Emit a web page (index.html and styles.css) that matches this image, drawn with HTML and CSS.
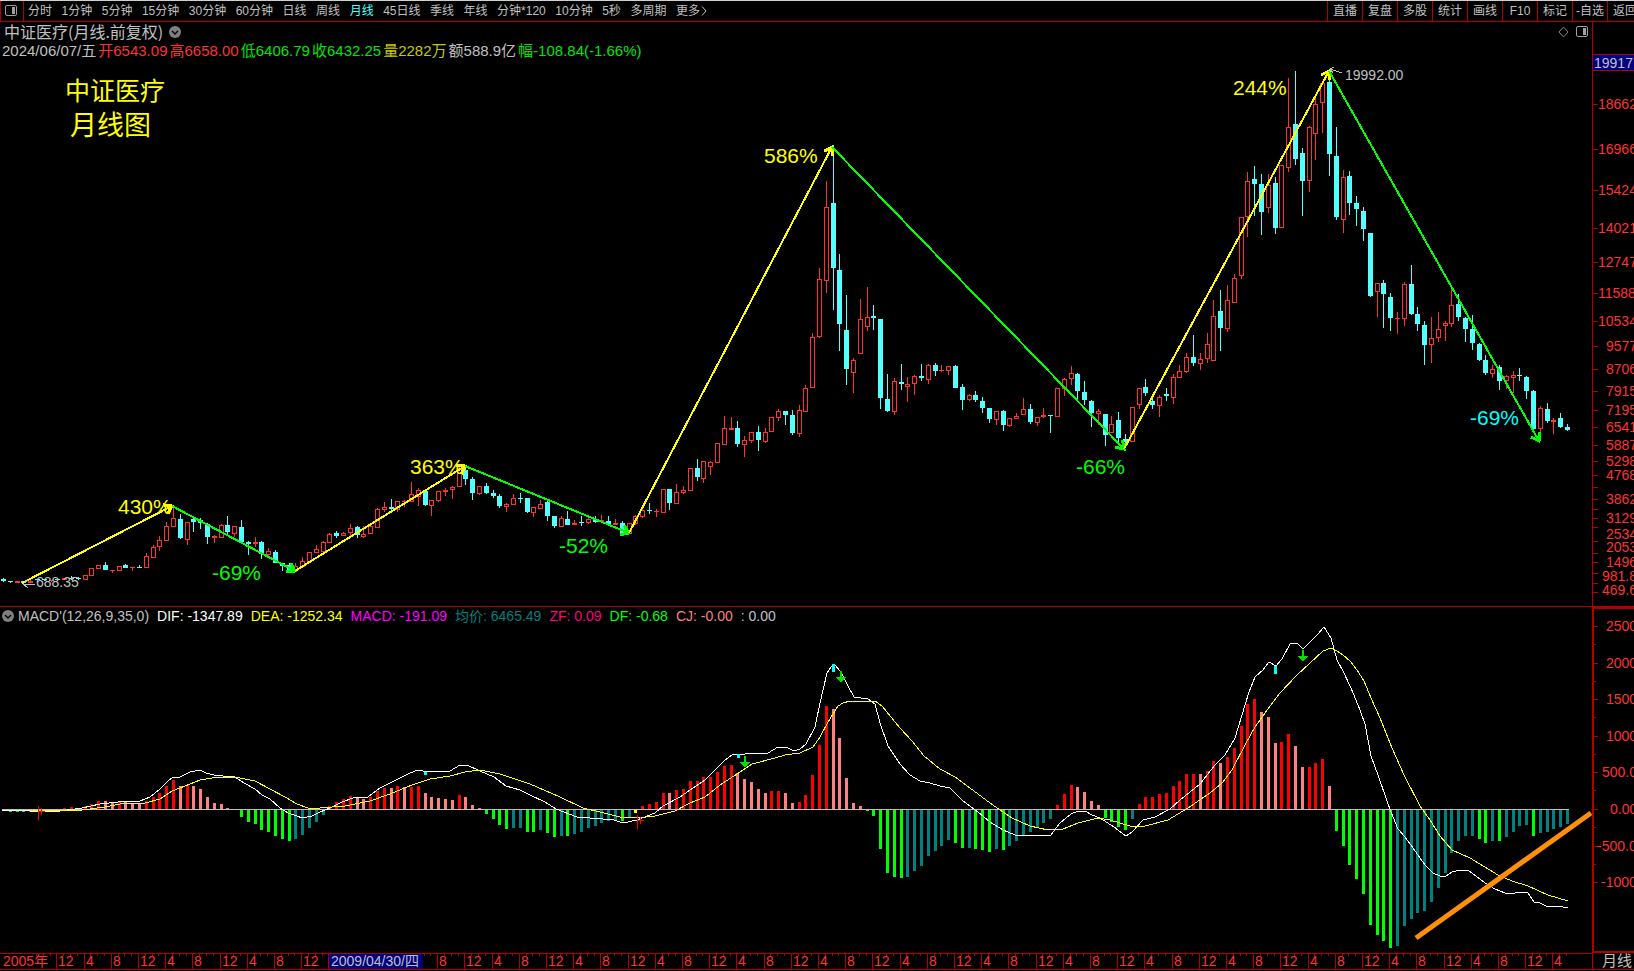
FILE: index.html
```
<!DOCTYPE html>
<html lang="zh-CN">
<head>
    <meta charset="UTF-8">
    <title>中证医疗 月线</title>
    <link rel="stylesheet" href="styles.css">
</head>
<body>
    <div class="toolbar">
        <button class="panel-btn" type="button" aria-label="侧栏">
            <svg width="12" height="12" viewBox="0 0 12 12"><rect x="0.5" y="0.5" width="11" height="10" rx="1.5" fill="none" stroke="#a0a0a0"/><rect x="7" y="2" width="3" height="7" fill="#a0a0a0"/></svg>
        </button>
        <div class="periods">
            <button type="button">分时</button>
            <button type="button">1分钟</button>
            <button type="button">5分钟</button>
            <button type="button">15分钟</button>
            <button type="button">30分钟</button>
            <button type="button">60分钟</button>
            <button type="button">日线</button>
            <button type="button">周线</button>
            <button type="button" class="active">月线</button>
            <button type="button">45日线</button>
            <button type="button">季线</button>
            <button type="button">年线</button>
            <button type="button">分钟*120</button>
            <button type="button">10分钟</button>
            <button type="button">5秒</button>
            <button type="button">多周期</button>
            <button type="button">更多<svg width="8" height="10" viewBox="0 0 8 10"><path d="M2 0.5L6 5L2 9.5" fill="none" stroke="#c0c0c0"/></svg></button>
        </div>
        <div class="tools">
            <button type="button">直播</button>
            <button type="button">复盘</button>
            <button type="button">多股</button>
            <button type="button">统计</button>
            <button type="button">画线</button>
            <button type="button">F10</button>
            <button type="button">标记</button>
            <button type="button">-自选</button>
            <button type="button">返回</button>
        </div>
    </div>

    <div class="stage">
        <div class="pane price">
            <svg class="plot" id="priceChart" viewBox="0 22 1592 584" preserveAspectRatio="none"></svg>
            <div class="head">
                <div class="title">
                    <span>中证医疗(月线.前复权)</span>
                    <svg width="12" height="12" viewBox="0 0 12 12"><circle cx="6" cy="6" r="6" fill="#808080"/><path d="M3 5L6 8L9 5" fill="none" stroke="#000" stroke-width="1.5"/></svg>
                    <svg class="corner" width="30" height="12" viewBox="0 0 30 12"><path d="M5.5 1L10 6L5.5 11L1 6Z" fill="none" stroke="#808080"/><rect x="18.5" y="0.5" width="11" height="10" rx="1.5" fill="none" stroke="#a0a0a0"/><rect x="25" y="2" width="3" height="7" fill="#a0a0a0"/></svg>
                </div>
                <div class="quote">
                    <span>2024/06/07/五</span>
                    <span class="up">开6543.09</span>
                    <span class="up">高6658.00</span>
                    <span class="down">低6406.79</span>
                    <span class="down">收6432.25</span>
                    <span class="vol">量2282万</span>
                    <span>额588.9亿</span>
                    <span class="down">幅-108.84(-1.66%)</span>
                </div>
                <div class="caption">
                    <p class="name">中证医疗</p>
                    <p class="kind">月线图</p>
                </div>
            </div>
        </div>
        <div class="scale"><svg id="priceScale" viewBox="0 22 42 584" preserveAspectRatio="none"></svg></div>

        <div class="pane macd">
            <svg class="plot" id="macdChart" viewBox="0 607 1592 346" preserveAspectRatio="none"></svg>
            <div class="legend">
                <svg width="12" height="12" viewBox="0 0 12 12"><circle cx="6" cy="6" r="6" fill="#808080"/><path d="M3 5L6 8L9 5" fill="none" stroke="#000" stroke-width="1.5"/></svg>
                <span>MACD'(12,26,9,35,0)</span>
                <span class="dif">DIF: -1347.89</span>
                <span class="dea">DEA: -1252.34</span>
                <span class="hist">MACD: -191.09</span>
                <span class="avg">均价: 6465.49</span>
                <span class="zf">ZF: 0.09</span>
                <span class="df">DF: -0.68</span>
                <span class="cj">CJ: -0.00</span>
                <span>: 0.00</span>
            </div>
        </div>
        <div class="scale thick"><svg id="macdScale" viewBox="0 609 42 342" preserveAspectRatio="none"></svg></div>

        <div class="time"><svg id="timeAxis" viewBox="0 954 1592 15" preserveAspectRatio="none"></svg></div>
        <div class="unit">月线</div>
    </div>

    <script src="chart.js"></script>
</body>
</html>
```

FILE: styles.css
```
* {
    margin: 0;
    padding: 0;
    box-sizing: border-box;
}

body {
    height: 100vh;
    display: flex;
    flex-direction: column;
    background: #000;
    color: #c0c0c0;
    font-family: "Liberation Sans", "Noto Sans CJK SC", sans-serif;
    font-size: 15px;
    overflow: hidden;
}

button {
    background: none;
    border: none;
    color: inherit;
    font: inherit;
    white-space: nowrap;
    cursor: pointer;
}

svg {
    display: block;
}

/* top bar */
.toolbar {
    flex: none;
    height: 22px;
    display: flex;
    border-top: 1px solid #d0d0d0;
    border-bottom: 1px solid #b00000;
    font-size: 12px;
    line-height: 20px;
}
.panel-btn {
    width: 24px;
    padding-left: 4px;
    border-left: 1px solid #b00000;
    border-right: 1px solid #b00000;
}
.periods {
    width: 680px;
    margin-left: 4px;
    display: flex;
    justify-content: space-between;
}
.periods button {
    display: flex;
    align-items: center;
}
.periods .active {
    color: #54ffff;
}
.tools {
    width: 307px;
    margin-left: auto;
    display: flex;
    overflow: hidden;
}
.tools button {
    flex: none;
    width: 35px;
    border-left: 1px solid #b00000;
}

/* chart panes with the scale on the right */
.stage {
    flex: 1;
    min-height: 0;
    display: grid;
    grid-template-columns: minmax(0, 1fr) 42px;
    grid-template-rows: minmax(0, 585fr) minmax(0, 346fr) 18px;
}
.pane {
    display: grid;
    grid-template-rows: minmax(0, 1fr);
    overflow: hidden;
}
.pane > * {
    grid-area: 1 / 1;
}
.price {
    border-bottom: 1px solid #b00000;
}
.plot {
    width: 100%;
    height: 100%;
}
.head,
.legend {
    z-index: 1;
    align-self: start;
}
.title {
    display: flex;
    align-items: center;
    gap: 6px;
    height: 20px;
    padding: 0 4px;
    font-family: "Noto Sans CJK SC", sans-serif;
    font-size: 16px;
    line-height: 18px;
}
.title span {
    height: 20px;
}
.corner {
    margin-left: auto;
}
.quote {
    display: flex;
    gap: 2px;
    padding-left: 2px;
    line-height: 18px;
}
.up {
    color: #ff3232;
}
.down {
    color: #00e600;
}
.vol {
    color: #c8c800;
}
.caption {
    padding: 14px 0 0 65px;
    color: #ff0;
    font-size: 25px;
    line-height: 35px;
}
.caption .kind {
    padding-left: 5px;
    font-size: 27px;
}
.legend {
    display: flex;
    align-items: center;
    gap: 8px;
    padding-left: 2px;
    font-size: 14px;
    line-height: 18px;
}
.legend svg {
    margin-right: -4px;
}
.dif { color: #fff; }
.dea { color: #ff0; }
.hist { color: #f0f; }
.avg { color: #008080; }
.zf { color: #ff0080; }
.df { color: #0f0; }
.cj { color: #ff8080; }

.scale {
    border-left: 1px solid #b00000;
    border-bottom: 1px solid #b00000;
    overflow: hidden;
}
.scale.thick {
    border: 2px solid #b00000;
    border-width: 2px 0 2px 2px;
}
.scale svg {
    width: 42px;
    height: 100%;
    overflow: visible;
}
.time {
    border-top: 1px solid #b00000;
    border-bottom: 1px solid #b00000;
    margin-bottom: 1px;
}
.time svg {
    width: 100%;
    height: 100%;
}
.unit {
    border-left: 1px solid #b00000;
    border-bottom: 1px solid #b00000;
    margin-bottom: 1px;
    padding-left: 9px;
    line-height: 16px;
}

/* svg text and marks */
.plot {
    shape-rendering: crispEdges;
}
.trendline {
    shape-rendering: auto;
}
.pct {
    font-size: 21px;
}
.tag {
    font-size: 14px;
    fill: #c0c0c0;
}
.num {
    font-size: 14px;
    fill: #ff3232;
}
.num.sel {
    fill: #c0c0c0;
}
```

FILE: chart.js
```
// one entry per month: wick top, wick bottom, body top, body bottom, r = up / c = down
const candles = `578 582 579 581 c|581 583 581 582 c|581 583 581 583 r|581 583 581 583 c|580 583 581 583 r|579 581 579 580 c|579 581 579 580 c|580 582 580 581 r|578 581 579 580 c|578 580 578 580 r|576 580 578 579 c|577 580 578 579 c|575 580 575 580 r|568 576 568 576 r|565 569 565 569 r|562 570 565 570 c|570 573 570 571 r|566 571 566 571 r|564 568 565 568 c|567 571 567 568 r|565 568 567 568 c|553 568 556 568 r|545 558 547 558 r|536 551 540 547 r|522 541 526 541 r|506 527 518 527 r|514 539 519 538 c|522 545 522 540 r|516 532 519 522 c|518 529 520 523 c
523 544 524 537 c|535 543 536 538 r|524 538 525 538 r|516 534 525 532 c|526 537 526 534 r|520 542 527 542 c|541 555 542 544 c|537 547 542 544 r|541 559 542 554 c|548 556 551 555 r|550 563 552 563 c|563 571 563 566 c|563 571 565 570 c|563 571 566 571 r|557 567 561 567 r|552 562 552 562 r|545 553 549 553 r|541 552 542 552 r|533 543 534 543 r|531 538 533 536 c|532 536 533 536 r|524 536 528 533 r|526 538 527 535 c|526 538 534 537 r|523 534 526 534 r|508 528 509 528 r|502 512 507 510 r|499 513 507 509 c|501 512 501 510 r|500 507 501 502 r
482 502 494 502 r|488 506 490 497 r|490 506 491 505 c|500 516 500 506 r|491 502 491 501 r|488 496 490 492 r|486 499 487 490 r|464 487 468 487 r|466 485 470 479 c|477 500 479 493 c|486 495 486 494 r|483 494 486 493 c|490 498 493 496 c|494 508 496 506 c|503 512 504 507 r|494 505 498 505 r|493 503 498 499 c|498 513 498 512 c|507 517 507 513 r|500 509 504 509 r|501 521 502 516 c|516 528 516 526 c|516 527 518 527 r|511 525 519 525 c|520 525 523 525 r|516 526 522 523 c|517 524 519 523 r|516 523 520 522 c|515 523 520 522 r|516 526 521 524 c
519 525 523 525 r|521 535 523 534 c|523 534 523 534 r|515 525 516 524 r|508 518 510 517 r|503 514 510 511 c|509 517 511 512 r|489 513 489 513 r|489 510 489 503 c|484 504 492 504 r|486 494 490 493 r|468 491 468 491 r|459 481 468 477 c|461 483 461 479 r|461 475 462 467 r|443 463 443 463 r|416 445 428 445 r|417 430 428 430 r|421 447 428 444 c|436 457 440 445 r|432 443 432 441 r|426 451 432 440 c|428 443 432 442 r|417 432 417 432 r|409 421 411 418 r|411 425 411 415 c|410 435 415 433 c|405 437 410 434 r|385 412 388 412 r|333 388 337 388 r
268 338 279 337 r|181 293 207 281 r|145 310 203 268 c|254 351 270 324 c|295 385 330 369 c|358 393 360 373 r|299 354 319 354 r|287 331 317 327 r|305 330 316 318 c|319 409 319 398 c|374 412 399 411 c|378 415 381 412 r|364 390 382 384 c|377 402 384 387 r|375 395 376 384 r|364 381 376 378 c|364 384 365 380 r|363 376 365 371 c|365 372 370 371 r|366 375 366 371 r|365 388 366 388 c|384 410 387 400 c|394 401 395 400 r|391 402 395 400 c|397 413 401 408 c|408 423 408 419 c|411 425 411 420 r|410 431 411 425 c|418 427 418 426 r|413 419 416 419 r
398 415 409 415 r|404 424 409 422 c|417 426 417 423 r|408 418 415 417 r|415 433 415 416 c|388 417 388 417 r|378 396 379 389 r|366 385 373 379 r|373 400 374 391 c|381 405 392 400 c|400 427 401 413 c|409 425 411 414 r|414 446 414 435 c|416 433 424 433 r|412 443 420 438 c|434 445 439 442 c|407 442 407 442 r|388 409 388 405 r|379 396 387 393 c|399 409 401 405 c|395 417 397 406 r|388 401 394 396 c|374 404 377 398 r|365 378 371 378 r|353 373 357 372 r|335 366 357 363 c|353 370 359 364 r|333 363 344 359 r|300 361 316 361 r|290 351 311 328 c
285 332 300 329 r|274 303 278 303 r|217 279 217 276 r|172 237 181 217 r|166 216 179 184 c|174 235 184 212 c|174 213 185 208 r|177 234 183 228 c|165 228 165 228 r|78 172 127 168 r|71 165 124 159 c|148 216 153 181 c|126 192 127 181 r|98 160 104 134 r|83 133 83 103 r|71 176 82 154 c|127 220 156 217 c|170 233 177 220 r|171 215 176 203 c|196 226 203 209 c|207 241 211 229 c|233 297 233 296 c|283 317 283 292 r|280 328 283 294 c|293 331 297 318 c|312 334 318 319 r|282 326 284 319 r|265 315 284 314 c|307 331 314 324 c|321 365 325 345 c
317 363 338 345 r|312 342 329 338 r|321 341 323 326 r|289 327 305 324 r|294 321 304 317 c|317 342 318 329 c|315 350 329 343 c|343 361 344 360 c|355 375 360 373 c|365 378 369 374 r|365 390 367 381 c|375 389 376 381 r|371 393 375 378 r|368 381 375 376 c|376 399 377 391 c|390 429 391 429 c|406 439 408 429 r|403 423 409 421 c|418 434 420 422 r|413 428 418 427 c|424 431 427 430 c`.split(/[|\n]/);

// MACD columns: R/P above zero, G/T below zero
const columns = `G1 G2 G2 G2 T2 Y1 Y1 T1 R0 R1 R2 P1 R3 R5 R8 P8 P7 R8 P8 P6 P6 R8 R12 R16 R23 R29 P23 R24 P23 P20 P12 P6 P5 P1 P0 G7 G12 G14 G20 G22 G26 G29 G31 T29 T25 T18 T12 T5
R3 R7 R10 R13 P12 P10 R12 R18 R21 P21 R23 P22 R22 R23 P16 P12 P11 P10 P9 R14 P12 P4 P1 G4 G9 G15 G19 T18 T18 G22 G22 T20 G23 G27 T26 G26 T24 T22 T18 T16 T13 T11 T11 G11 T8 Y3
R3 R5 R7 R16 P16 R19 R20 R28 R28 R32 R32 R37 R43 R44 P36 P30 P27 P20 P16 R18 R18 P16 P6 R7 R14 R34 R64 R103 P100 P71 P31 P6 P3 G1 G6 G39 G63 G67 G68 T67 T61 T56 T46 T41 T36 T30 G33 G38 T38 G39 G40 G42 T39 G40 T36 T31 T25 T22 T18 T13 T9
R4 R15 R24 P22 P17 P8 P4 G8 G12 G17 G20 T9 R5 R12 R12 R15 R16 R23 R28 R35 R35 P35 R38 R48 P46 R52 R61 R83 R105 R110 P97 P92 P66 R67 R75 P63 P42 R42 R46 R50 P23 G21 G36 G55 G69 G84 G115 G125 G131 G138 T136 T116 T109 T103 T101 T92 T78 T63 T43 T31 T26 T26 G29 G33 T31 G31 T27 T22 T16 T15 G26 T23 T22 T19 T17 T14`.split(/\s+/);

const dif = "2,810 30,811 60,811 82,808 100,804 118,802 140,801 150,797 160,789 168,781 173,777 180,777 190,772 200,770 206,773 214,775 223,776 235,777 244,783 255,789 262,795 270,799 280,808 288,813 297,816 302,818 312,816 320,812 330,808 342,802 356,797 368,797 380,788 400,778 410,773 418,770 428,772 450,771 460,765 467,765 480,771 494,777 506,786 520,790 530,795 545,802 556,809 577,817 603,819 614,820 623,823 637,820 655,813 663,806 680,797 690,790 705,780 716,769 725,760 732,755 745,754 752,753 768,753 778,747 786,747 794,751 800,749 806,744 815,727 820,703 827,673 831,667 835,665 841,672 848,686 854,697 868,699 875,704 880,723 888,746 900,764 910,775 920,781 930,783 940,786 950,788 963,801 978,812 990,822 1003,830 1015,835 1030,836 1051,835 1060,823 1071,814 1078,811 1085,811 1092,815 1100,818 1114,827 1126,836 1132,832 1143,820 1155,817 1170,809 1180,800 1200,784 1215,765 1225,755 1235,738 1242,715 1249,692 1255,677 1263,670 1269,662 1276,666 1282,659 1290,644 1297,643 1303,649 1312,640 1318,634 1324,627 1331,638 1337,660 1343,671 1351,688 1360,710 1365,724 1371,756 1378,775 1386,798 1391,812 1398,829 1405,837 1413,848 1425,865 1433,873 1440,876 1446,876 1452,872 1460,870 1468,870 1476,876 1485,883 1495,889 1505,893 1515,893 1522,892 1528,893 1534,902 1540,903 1546,906 1558,906 1568,908";
const dea = "30,810 82,810 105,807 120,804 145,803 160,799 172,791 180,788 190,784 200,780 218,777 235,777 255,781 270,789 285,797 297,804 308,808 320,808 345,806 370,801 390,794 412,785 430,779 450,776 465,772 480,770 500,774 530,784 560,797 583,808 600,812 620,817 637,818 655,816 675,811 690,803 705,797 720,785 737,774 752,764 775,758 785,755 800,753 813,747 820,737 828,722 838,706 843,703 850,701 875,701 882,706 900,728 912,741 924,756 940,769 955,777 970,788 990,803 1003,812 1012,818 1030,826 1048,830 1063,829 1078,823 1098,818 1110,820 1130,826 1145,826 1168,820 1188,808 1210,793 1222,783 1232,770 1245,745 1255,727 1270,706 1280,693 1297,675 1310,663 1323,651 1331,648 1337,651 1343,655 1350,661 1357,670 1364,681 1371,698 1380,718 1392,748 1404,775 1420,806 1430,820 1440,836 1452,850 1470,858 1498,875 1512,881 1528,886 1548,895 1568,901";

const trend = [[22, 583], [172, 506], [295, 571], [465, 466], [629, 533], [832, 147], [1124, 449], [1329, 71], [1539, 441]];
const labels = [
    ["430%", 118, 514, "#ff0"], ["-69%", 212, 580, "#0f0"], ["363%", 410, 474, "#ff0"],
    ["-52%", 559, 553, "#0f0"], ["586%", 764, 163, "#ff0"], ["-66%", 1076, 474, "#0f0"],
    ["244%", 1233, 95, "#ff0"], ["-69%", 1470, 425, "#0ff"]
];

const zero = 809;
const colors = { R: "#f00", P: "#ff8080", G: "#0f0", T: "#008080", Y: "#ff0", r: "#ff3232", c: "#54ffff" };
const col = i => Math.round(3 + 6.8 * i);
const box = (x, y, w, h, fill) => `<rect x="${x}" y="${y}" width="${w}" height="${h}" fill="${fill}"/>`;
const line = (pts, color, w) => `<polyline points="${pts}" fill="none" stroke="${color}" stroke-width="${w}"/>`;

function arrowHead([x1, y1], [x2, y2], color) {
    const a = Math.atan2(y2 - y1, x2 - x1);
    const p = d => `${x2 - 9 * Math.cos(a + d)},${y2 - 9 * Math.sin(a + d)}`;
    return line(`${p(0.6)} ${x2},${y2} ${p(-0.6)}`, color, 3);
}

function drawPrice() {
    let out = "";
    candles.forEach((row, i) => {
        const [hi, lo, top, bot, dir] = row.split(" ");
        const x = col(i), c = colors[dir], h = bot - top;
        if (dir === "r" && h > 2) {
            out += box(x, hi, 1, top - hi, c) + box(x, bot, 1, lo - bot, c);
            out += `<rect x="${x - 1.5}" y="${+top + 0.5}" width="4" height="${h - 1}" fill="none" stroke="${c}"/>`;
        } else {
            out += box(x, hi, 1, lo - hi, c) + box(x - 2, top, 5, h, c);
        }
    });
    for (let i = 1; i < trend.length; i++) {
        const color = i % 2 ? "#ff0" : "#0f0";
        out += line(trend[i - 1].join() + " " + trend[i].join(), color, 2);
        out += arrowHead(trend[i - 1], trend[i], color);
    }
    labels.forEach(([t, x, y, c]) => out += `<text class="pct" x="${x}" y="${y}" fill="${c}">${t}</text>`);
    out += line("28,580 23,584 28,588", "#c0c0c0", 1) + line("23,584 35,584", "#c0c0c0", 1);
    out += '<text class="tag" x="36" y="587">688.35</text>';
    out += line("1334,67 1330,69 1333,73", "#c0c0c0", 1) + line("1330,69 1342,73", "#c0c0c0", 1);
    out += '<text class="tag" x="1345" y="80">19992.00</text>';
    document.getElementById("priceChart").innerHTML = out;
}

function drawMacd() {
    let out = "";
    columns.forEach((s, i) => {
        const h = +s.slice(1);
        const up = s[0] === "R" || s[0] === "P";
        out += box(col(i) - 1, up ? zero - h : zero + 1, 3, h, colors[s[0]]);
    });
    out += box(2, zero, 1567, 1, "#c0c0c0");
    out += line(dif, "#fff", 1) + line(dea, "#ff0", 1);
    out += box(424, 772, 3, 3, "#0ff") + box(737, 754, 3, 4, "#0ff") + box(832, 664, 3, 8, "#0ff") + box(1274, 666, 3, 8, "#0ff");
    [[745, 756], [841, 671], [1303, 650]].forEach(([x, y]) => {
        out += `<path d="M${x - 1} ${y}h2v6h4l-5 6l-5 -6h4z" fill="#00e000"/>`;
    });
    [38, 637].forEach((x, i) => {
        const y = i ? 815 : 806;
        out += box(x, y, 1, 14, "#f00") + box(x + 3, y + 2, 1, 7, "#f00") + box(x, y + 5, 7, 1, "#f00");
    });
    out += '<g class="trendline">' + line("1416,938 1591,813", "#ff9008", 5) + "</g>";
    document.getElementById("macdChart").innerHTML = out;
}

function drawScales() {
    const red = "#b00000";
    const prices = [[18662, 104], [16966, 149], [15424, 190], [14021, 228], [12747, 262], [11588, 293], [10534, 321],
        [9577, 346], [8706, 369], [7915, 391], [7195, 410], [6541, 427], [5887, 445], [5298, 461], [4768, 475],
        [3862, 499], [3129, 518], [2534, 534], [2053, 547], [1496, 562], ["981.8", 576], ["469.6", 590]];
    const at = t => ({ "0.00": 17, "-500.0": 4, "-1000": 8 }[t] || (String(t).includes(".") ? 9 : String(t).length > 4 ? 5 : 13));
    let out = "";
    [104, 149, 190, 228, 262, 293, 321, 346, 369, 391, 410, 427, 445, 461, 475, 487, 499, 509, 518, 527, 541, 553, 562, 573, 583, 592]
        .forEach(y => out += box(0, y, 5, 1, red));
    prices.forEach(([t, y]) => out += `<text class="num" x="${at(t)}" y="${y + 5}">${t}</text>`);
    out += box(0, 54, 42, 17, red) + box(0, 55, 42, 15, "#000080") + '<text class="num sel" x="1" y="68">19917</text>';
    document.getElementById("priceScale").innerHTML = out;

    out = "";
    ["2500", "2000", "1500", "1000", "500.0", "0.00", "-500.0", "-1000"].forEach((t, i) => {
        const y = Math.round(626 + 36.6 * i);
        out += box(0, y, 4, 1, red) + (i < 7 ? box(0, y + 18, 2, 1, red) : "");
        out += `<text class="num" x="${at(t) - 1}" y="${y + 5}">${t}</text>`;
    });
    document.getElementById("macdScale").innerHTML = out;
}

function drawTime() {
    const red = "#b00000";
    let out = '<text class="num" x="3" y="966">2005年</text>';
    // series starts in April 2005
    for (let i = 5; i < 231; i++) {
        // months 48-61 lie under the selected date
        if (i >= 48 && i <= 61) continue;
        const month = (i + 3) % 12 + 1;
        const major = month % 4 === 0 && i > 7;
        const x = col(i) - 1;
        out += box(x, 954, 1, major ? 15 : 2, red);
        if (major) {
            out += `<text class="num" x="${x + 2}" y="966">${month}</text>`;
        }
    }
    out += box(329, 954, 94, 15, "#000080") + box(328, 954, 1, 15, red) + '<text class="num sel" x="331" y="966">2009/04/30/四</text>';
    document.getElementById("timeAxis").innerHTML = out;
}

drawPrice();
drawMacd();
drawScales();
drawTime();
```
